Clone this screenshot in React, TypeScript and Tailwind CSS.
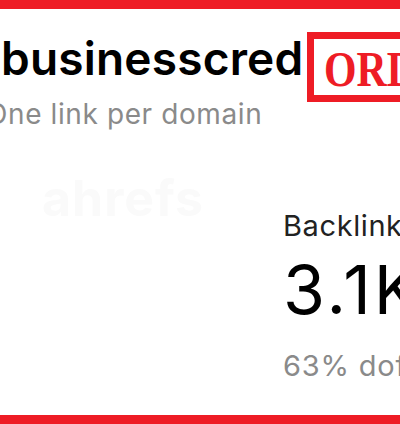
import React from "react";

export default function App() {
  return (
    <div
      className="w-[400px] h-[424px] flex flex-col bg-white overflow-hidden relative"
      style={{ fontFamily: "Inter, 'Noto Sans', sans-serif" }}
    >
      <div className="h-[9px] shrink-0 bg-[#ee1c25]" />
      <div className="flex-1 flex flex-col relative">
        <div className="flex items-start mt-[23px] w-[560px]">
          <div className="w-[307px] shrink-0 pl-[1px] pt-[1px] text-[46px] leading-[50px] font-semibold text-black tracking-[0.2px] whitespace-nowrap">
            businesscred
          </div>
          <div className="shrink-0 w-[200px] h-[70px] border-[7px] border-[#ee1c25] pl-[10px] flex items-center">
            <span
              className="inline-block origin-left scale-x-[0.82] text-[51px] leading-[54px] font-bold text-[#ee1c25] whitespace-nowrap pt-[4px]"
              style={{ fontFamily: "'Liberation Serif', serif" }}
            >
              ORDER
            </span>
          </div>
        </div>
        <div className="-mt-[5px] ml-[-14px] text-[28px] leading-[34px] text-[#8a8a8a] tracking-[0.6px] whitespace-nowrap">
          One link per domain
        </div>
        <div className="absolute left-[42px] top-[164px] text-[50px] font-bold text-[#fafafa] tracking-[1px] leading-none select-none">
          ahrefs
        </div>
        <div className="ml-[283px] mt-[78px] flex flex-col w-[220px]">
          <div className="text-[29px] leading-[34px] text-[#222] tracking-[0.6px] whitespace-nowrap">Backlinks</div>
          <div className="mt-[10px] text-[68px] leading-[72px] text-black tracking-[3px] whitespace-nowrap">3.1K</div>
          <div className="mt-[24px] text-[29px] leading-[34px] text-[#8a8a8a] tracking-[0.8px] whitespace-nowrap">63% dofollow</div>
        </div>
      </div>
      <div className="h-[9px] shrink-0 bg-[#ee1c25]" />
    </div>
  );
}
